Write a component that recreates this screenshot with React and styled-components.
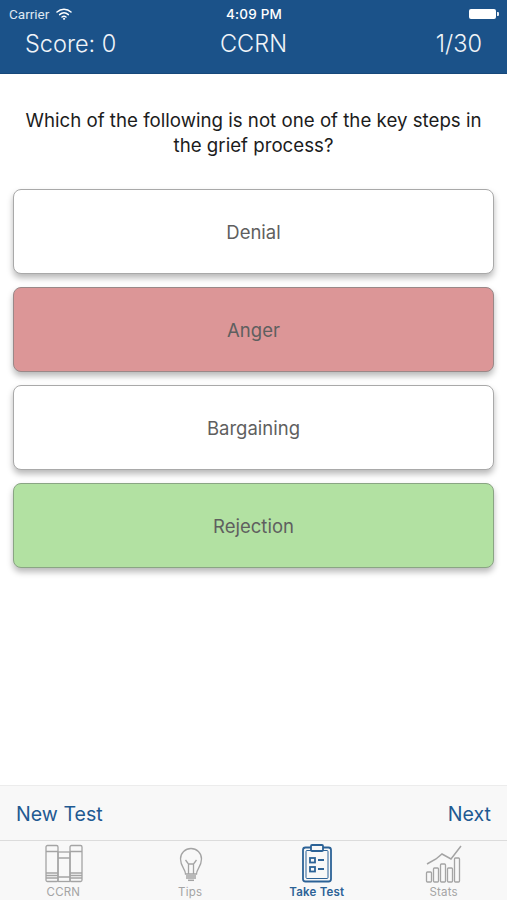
import React from 'react';
import styled, { createGlobalStyle } from 'styled-components';

const GlobalStyle = createGlobalStyle`
  html, body {
    margin: 0;
    padding: 0;
    background: #fff;
  }
  body {
    font-family: 'Liberation Sans', Arial, sans-serif;
  }
`;

const Page = styled.div`
  width: 507px;
  height: 900px;
  display: flex;
  flex-direction: column;
  overflow: hidden;
  background: #fff;
`;

const Header = styled.header`
  height: 74px;
  flex: none;
  background: #1b5289;
  color: #fff;
  box-sizing: border-box;
  border-bottom: 1px solid #16487a;
`;

const StatusBar = styled.div`
  height: 27px;
  display: grid;
  grid-template-columns: 1fr auto 1fr;
  align-items: center;
  padding: 0 8px 1px 9px;
  font-family: 'Inter', sans-serif;
  font-size: 13px;
`;

const Carrier = styled.div`
  display: flex;
  align-items: center;
  gap: 7px;
  color: #dfe8f1;
  font-weight: 400;
  font-size: 13.5px;
  font-family: 'Roboto', sans-serif;
`;

const Clock = styled.div`
  font-weight: 500;
  font-size: 13.5px;
  letter-spacing: 0.2px;
`;

const Battery = styled.div`
  justify-self: end;
  display: flex;
  align-items: center;
  gap: 1px;
`;

const BatteryBody = styled.div`
  width: 27px;
  height: 10px;
  border-radius: 2px;
  background: #fff;
`;

const BatteryTip = styled.div`
  width: 2px;
  height: 4px;
  border-radius: 0 1px 1px 0;
  background: #e8eef5;
`;

const TitleRow = styled.div`
  display: grid;
  grid-template-columns: 1fr auto 1fr;
  align-items: center;
  padding: 1px 25px 0;
  font-family: 'Inter', sans-serif;
  font-weight: 300;
  font-size: 23.5px;
  line-height: 30px;
  color: #f0f4f8;
`;

const RightCell = styled.div`
  justify-self: end;
`;

const Main = styled.main`
  flex: 1;
  display: flex;
  flex-direction: column;
  padding: 0 13px;
  min-height: 0;
`;

const Question = styled.p`
  margin: 34px 0 0;
  text-align: center;
  font-family: 'Inter', sans-serif;
  font-size: 18.7px;
  line-height: 25px;
  color: #1c1c1c;
`;

const Answers = styled.div`
  margin-top: 31px;
  display: flex;
  flex-direction: column;
  gap: 13px;
`;

const Answer = styled.button`
  height: 85px;
  box-sizing: border-box;
  width: 100%;
  border-radius: 8px;
  border: 1.5px solid ${(p) => p.$border};
  background: ${(p) => p.$fill};
  box-shadow: 0 4px 6px rgba(0, 0, 0, 0.28);
  color: #5f5f5f;
  font-family: 'Inter', sans-serif;
  font-size: 18.5px;
  padding: 0;
`;

const ActionBar = styled.div`
  height: 55px;
  flex: none;
  box-sizing: border-box;
  display: flex;
  align-items: center;
  justify-content: space-between;
  padding: 2px 16px 0;
  background: #f8f8f8;
  border-top: 1px solid #ececec;
  font-family: 'Inter', sans-serif;
  font-size: 19.6px;
  color: #1f5a92;
`;

const TabBar = styled.nav`
  height: 60px;
  flex: none;
  display: grid;
  grid-template-columns: repeat(4, 1fr);
  background: #f8f8f8;
  border-top: 1px solid #dcdcdc;
  box-sizing: border-box;
`;

const Tab = styled.div`
  display: flex;
  flex-direction: column;
  align-items: center;
  padding-top: 1px;
  color: ${(p) => (p.$active ? '#2c6296' : '#a4a4a4')};
  font-family: 'Inter', sans-serif;
  font-size: 11.5px;
  font-weight: ${(p) => (p.$active ? 600 : 400)};
`;

const TabIcon = styled.svg`
  width: 40px;
  height: 42px;
  flex: none;
  fill: none;
  stroke: currentColor;
`;

const TabLabel = styled.span`
  margin-top: 1px;
  line-height: 14px;
  letter-spacing: 0.2px;
`;

const Wifi = () => (
  <svg width="16" height="12" viewBox="0 0 16 12" fill="none" stroke="#fff" strokeLinecap="round">
    <path d="M1 4c4-3.6 10-3.6 14 0" strokeWidth="1.5" />
    <path d="M3.6 6.6c2.6-2.2 6.2-2.2 8.8 0" strokeWidth="1.5" />
    <path d="M6 9c1.200-.9 2.800-.9 4 0" strokeWidth="1.500" />
    <circle cx="8" cy="10.800" r=".6" fill="#fff" />
  </svg>
);

const BooksIcon = () => (
  <TabIcon viewBox="0 0 40 42" strokeWidth="1.3">
    <rect x="3" y="3.500" width="12" height="36" rx="1.500" />
    <rect x="15" y="10" width="12" height="29.500" />
    <rect x="27" y="3.500" width="12" height="36" rx="1.500" />
    <path d="M3 9.500h12M27 9.500h12M15 16h12M3 31h12M3 33.500h12M3 36h12M27 31h12M27 33.500h12M27 36h12M15 35h12" />
  </TabIcon>
);

const BulbIcon = () => (
  <TabIcon viewBox="0 0 40 42" strokeWidth="1.300">
    <path d="M15.500 32c0-5-5-7.500-5-15a10.500 10.500 0 0 1 21 0c0 7.500-5 10-5 15z" />
    <path d="M18.500 32V22l-3-4M23.500 32V22l3-4M18.500 22h5" />
    <path d="M16 34h10M16 36h10" strokeWidth="1.600" />
    <path d="M18 38.300h6" strokeWidth="1.500" />
  </TabIcon>
);

const ClipboardIcon = () => (
  <TabIcon viewBox="0 0 40 42" strokeWidth="1.800">
    <rect x="6" y="5.500" width="28" height="34" rx="2.500" />
    <rect x="9" y="8.500" width="22" height="28" rx="1" strokeWidth="1" />
    <rect x="14" y="3" width="12" height="6" rx="1" fill="#f8f8f8" />
    <rect x="13" y="16" width="5" height="4.500" />
    <rect x="13" y="25" width="5" height="4.500" />
    <path d="M21 18h6M21 27h6" />
  </TabIcon>
);

const StatsIcon = () => (
  <TabIcon viewBox="0 0 40 42" strokeWidth="1.300">
    <rect x="2.500" y="30" width="5" height="10" rx="1" />
    <rect x="9.500" y="26" width="5" height="14" rx="1" />
    <rect x="16.500" y="22" width="5" height="18" rx="1" />
    <rect x="23.500" y="26" width="5" height="14" rx="1" />
    <rect x="30.500" y="16" width="5" height="24" rx="1" />
    <path d="M3 22l9-5 6-5 9 5 10-13" strokeWidth="1.500" />
  </TabIcon>
);

const answers = [
  { label: 'Denial', fill: '#ffffff', border: '#a9a9a9' },
  { label: 'Anger', fill: '#dc9697', border: '#9a8888' },
  { label: 'Bargaining', fill: '#ffffff', border: '#a9a9a9' },
  { label: 'Rejection', fill: '#b2e1a2', border: '#8aa584' },
];

const tabs = [
  { label: 'CCRN', Icon: BooksIcon },
  { label: 'Tips', Icon: BulbIcon },
  { label: 'Take Test', Icon: ClipboardIcon, active: true },
  { label: 'Stats', Icon: StatsIcon },
];

export default function App() {
  return (
    <Page>
      <GlobalStyle />
      <Header>
        <StatusBar>
          <Carrier>
            Carrier
            <Wifi />
          </Carrier>
          <Clock>4:09 PM</Clock>
          <Battery>
            <BatteryBody />
            <BatteryTip />
          </Battery>
        </StatusBar>
        <TitleRow>
          <div>Score: 0</div>
          <div>CCRN</div>
          <RightCell>1/30</RightCell>
        </TitleRow>
      </Header>
      <Main>
        <Question>
          Which of the following is not one of the key steps in the grief process?
        </Question>
        <Answers>
          {answers.map((a) => (
            <Answer key={a.label} $fill={a.fill} $border={a.border}>
              {a.label}
            </Answer>
          ))}
        </Answers>
      </Main>
      <ActionBar>
        <span>New Test</span>
        <span>Next</span>
      </ActionBar>
      <TabBar>
        {tabs.map(({ label, Icon, active }) => (
          <Tab key={label} $active={active}>
            <Icon />
            <TabLabel>{label}</TabLabel>
          </Tab>
        ))}
      </TabBar>
    </Page>
  );
}
